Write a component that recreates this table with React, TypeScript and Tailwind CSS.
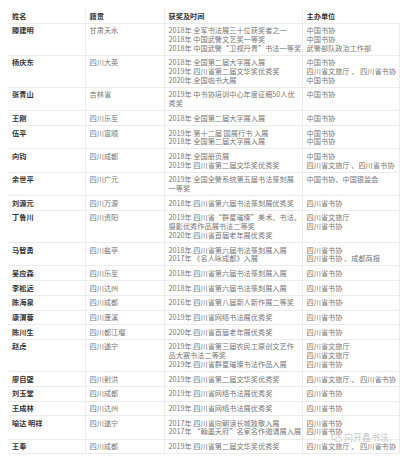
type Row = {
  name: string;
  place: string;
  awards: string[];
  orgs: string[];
};

const rows: Row[] = [
  {
    name: '滕建明',
    place: '甘肃天水',
    awards: ['2018年 全军书法展三十位获奖者之一', '2018年 中国武警文艺奖一等奖', '2018年 中国武警“卫视丹青”书法一等奖'],
    orgs: ['中国书协', '中国书协', '武警部队政治工作部'],
  },
  {
    name: '杨庆东',
    place: '四川大英',
    awards: ['2018年 全国第二届大字展入展', '2019年 四川省第二届文华奖优秀奖', '2020年 全国临书大展'],
    orgs: ['中国书协', '四川省文旅厅 、 四川省书协', '中国书协'],
  },
  {
    name: '张青山',
    place: '吉林省',
    awards: ['2019年 中书协培训中心年度征稿50人优', '秀奖'],
    orgs: ['中国书协'],
  },
  { name: '王刚', place: '四川乐至', awards: ['2018年 全国第二届大字展入展'], orgs: ['中国书协'] },
  {
    name: '伍平',
    place: '四川富顺',
    awards: ['2019年 第十二届 国展行书 入展', '2018年 全国第二届大字展入展'],
    orgs: ['中国书协', '中国书协'],
  },
  {
    name: '向钧',
    place: '四川成都',
    awards: ['2018年 全国册页展', '2019年 四川省第二届文华奖优秀奖'],
    orgs: ['中国书协', '四川省文旅厅 、四川省书协'],
  },
  {
    name: '余世平',
    place: '四川广元',
    awards: ['2019年 全国全警系统第五届书法篆刻展', '一等奖'],
    orgs: ['中国书协、中国银监会'],
  },
  { name: '刘源元', place: '四川万源', awards: ['2018年 四川省第六届书法篆刻展优秀奖'], orgs: ['四川省书协'] },
  {
    name: '丁鲁川',
    place: '四川资阳',
    awards: ['2019年 四川省“群星璀璨”美术、书法、', '摄影优秀作品展书法二等奖', '2020年 四川省首届老年展优秀奖'],
    orgs: ['四川省文旅厅', '四川省书协'],
  },
  {
    name: '马智勇',
    place: '四川盐亭',
    awards: ['2018年 四川省第六届书法篆刻展入展', '2017年 《名人咏成都》入展'],
    orgs: ['四川省书协', '四川省书协 、成都商报'],
  },
  { name: '吴应森', place: '四川乐至', awards: ['2018年 四川省第六届书法篆刻展入展'], orgs: ['四川省书协'] },
  { name: '李松远', place: '四川达州', awards: ['2018年 四川省第六届书法篆刻展入展'], orgs: ['四川省书协'] },
  { name: '陈海泉', place: '四川成都', awards: ['2016年 四川省第八届新人新作展二等奖'], orgs: ['四川省书协'] },
  { name: '康渭蓉', place: '四川蓬溪', awards: ['2019年 四川省网络书法展优秀奖'], orgs: ['四川省书协'] },
  { name: '陈川生', place: '四川都江堰', awards: ['2020年 四川省首届老年展优秀奖'], orgs: ['四川省书协'] },
  {
    name: '赵虎',
    place: '四川遂宁',
    awards: ['2019年 四川省第三届农民工原创文艺作', '品大赛书法二等奖', '2019年 四川省群星璀璨书法作品入展'],
    orgs: ['四川省文旅厅', '四川省文旅厅', '四川省书协'],
  },
  { name: '廖自壁', place: '四川射洪', awards: ['2019年 四川省第二届文华奖优秀奖'], orgs: ['四川省文旅厅 、 四川省书协'] },
  { name: '刘玉堂', place: '四川成都', awards: ['2019年 四川省网络书法展优秀奖'], orgs: ['四川省书协'] },
  { name: '王成林', place: '四川达州', awards: ['2019年 四川省网络书法展优秀奖'], orgs: ['四川省书协'] },
  {
    name: '喻达 明祥',
    place: '四川遂宁',
    awards: ['2017年 四川省向朝读长城致敬入展', '2017年 “翰墨天府”名家名作邀请展入展'],
    orgs: ['四川省书协', '四川省书协'],
  },
  { name: '王奉', place: '四川成都', awards: ['2019年 四川省第二届文华奖优秀奖'], orgs: ['四川省文旅厅 、 四川省书协'] },
];

const cell = 'border border-[#ececec] px-[4px] py-[2.5px] align-top';

export default function App() {
  return (
    <div
      className="relative w-[405px] h-[462px] bg-white overflow-hidden pt-[9px] pl-[8px]"
      style={{ fontFamily: '"Noto Sans CJK SC", "Noto Sans", sans-serif' }}
    >
      <table className="table-fixed border-collapse w-[391px] text-[7.2px] leading-[8.7px] text-[#777]">
        <colgroup>
          <col className="w-[77px]" />
          <col className="w-[79px]" />
          <col className="w-[138px]" />
          <col className="w-[97px]" />
        </colgroup>
        <thead>
          <tr className="text-left font-bold text-[#333]">
            <th className={`${cell} border-t-0 border-l-0`}>姓名</th>
            <th className={`${cell} border-t-0`}>籍贯</th>
            <th className={`${cell} border-t-0`}>获奖及时间</th>
            <th className={`${cell} border-t-0 border-r-0`}>主办单位</th>
          </tr>
        </thead>
        <tbody>
          {rows.map((r) => (
            <tr key={r.name}>
              <td className={`${cell} border-l-0 font-bold text-[#333]`}>{r.name}</td>
              <td className={cell}>{r.place}</td>
              <td className={cell}>
                {r.awards.map((a, i) => (
                  <div key={i} className="whitespace-nowrap">{a}</div>
                ))}
              </td>
              <td className={cell}>
                {r.orgs.map((o, i) => (
                  <div key={i} className="whitespace-nowrap">{o}</div>
                ))}
              </td>
            </tr>
          ))}
        </tbody>
      </table>

      {/* watermark */}
      <div className="absolute left-[331px] top-[431px] flex items-center gap-[2px] text-[9px] text-[#c4c4c4] opacity-90">
        <svg width="11" height="10" viewBox="0 0 22 20" fill="none" stroke="#c8c8c8" strokeWidth="1.6">
          <ellipse cx="9" cy="8" rx="7.5" ry="6" />
          <ellipse cx="15" cy="12.5" rx="6" ry="5" fill="white" />
        </svg>
        <span>向开鑫书法</span>
      </div>
    </div>
  );
}
